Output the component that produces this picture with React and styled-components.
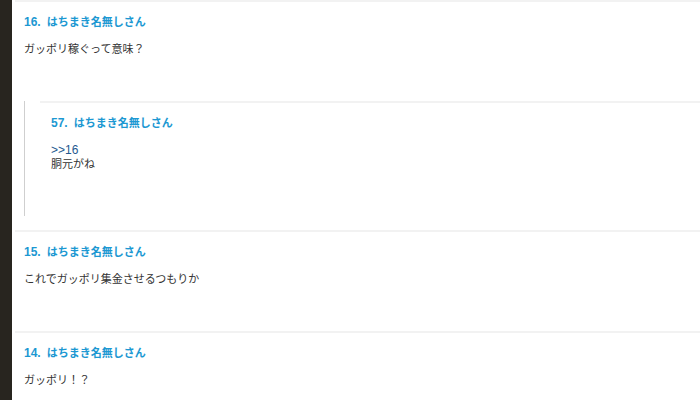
import React from "react";
import styled, { createGlobalStyle } from "styled-components";

const Global = createGlobalStyle`
  html, body { margin: 0; padding: 0; background: #fff; }
  body { font-family: "Liberation Sans", "Noto Sans CJK JP", sans-serif; }
`;

const Page = styled.div`
  display: flex;
  height: 400px;
  overflow: hidden;
`;

const SideStrip = styled.div`
  width: 12px;
  flex: none;
  background: #28251f;
`;

const List = styled.div`
  flex: 1;
  padding-left: 3px;
`;

const Post = styled.div`
  border-top: 2px solid #f2f2f2;
  padding: 13px 0 0 ${(p) => (p.$nested ? 11 : 9)}px;
`;

const Header = styled.div`
  display: flex;
  align-items: baseline;
  gap: 6px;
  line-height: 14px;
  font-weight: bold;
  color: #1c98d2;
`;

const No = styled.span`
  font-size: 12px;
`;

const Name = styled.span`
  font-size: 11px;
`;

const Body = styled.div`
  margin-top: 13px;
  margin-bottom: 45px;
  font-size: 11px;
  line-height: 14px;
  color: #333;
`;

const Anchor = styled.div`
  font-size: 12px;
  color: #24588f;
`;

const Quote = styled.div`
  display: flow-root;
  margin: 0 0 14px 0;
  border-left: 1px solid #cfcfcf;
  padding-left: 15px;
`;

const NAME = "はちまき名無しさん";

function Entry({ no, nested, children, reply }) {
  return (
    <Post $nested={nested}>
      <Header>
        <No>{no}.</No>
        <Name>{NAME}</Name>
      </Header>
      <Body>{children}</Body>
      {reply && <Quote>{reply}</Quote>}
    </Post>
  );
}

export default function App() {
  return (
    <>
      <Global />
      <Page>
        <SideStrip />
        <List>
          <Entry
            no={16}
            reply={
              <Entry no={57} nested>
                <Anchor>&gt;&gt;16</Anchor>
                胴元がね
              </Entry>
            }
          >
            ガッポリ稼ぐって意味？
          </Entry>
          <Entry no={15}>これでガッポリ集金させるつもりか</Entry>
          <Entry no={14}>ガッポリ！？</Entry>
        </List>
      </Page>
    </>
  );
}
